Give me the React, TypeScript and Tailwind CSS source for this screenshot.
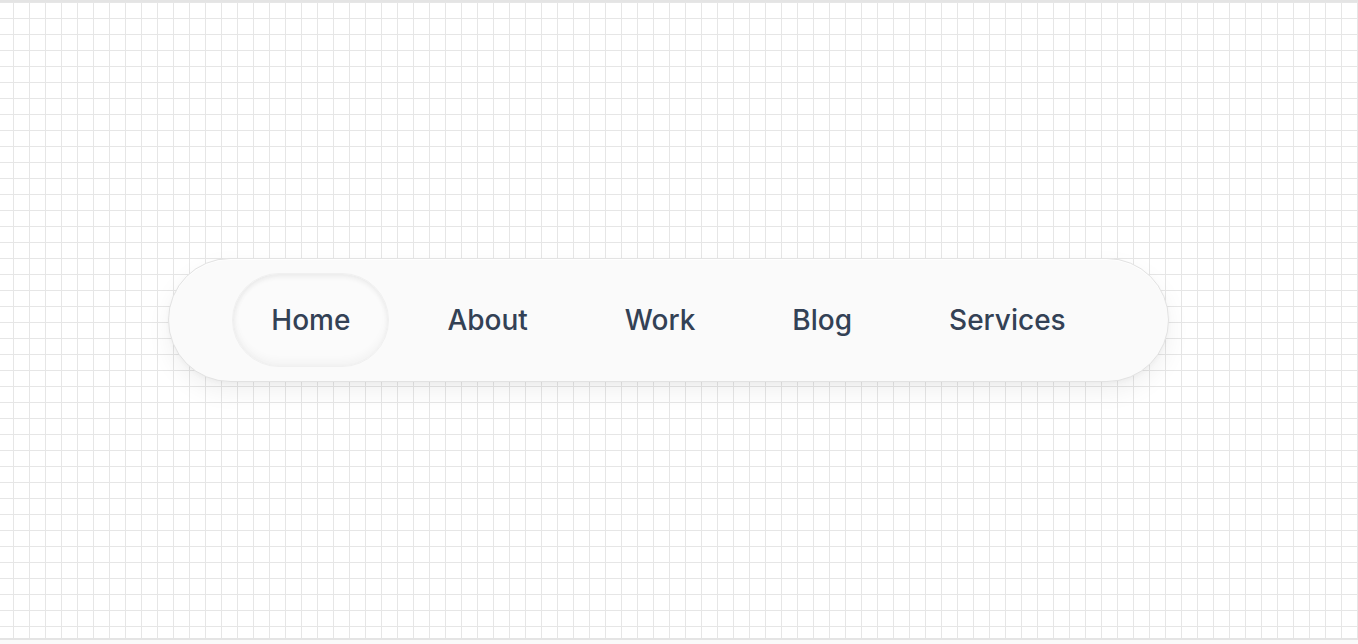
import React from "react";

const items = ["Home", "About", "Work", "Blog", "Services"];

export default function App() {
  return (
    <div className="h-[644px] w-full bg-[#fafafa] overflow-hidden" style={{ fontFamily: "Inter, 'Noto Sans', sans-serif" }}>
      <div className="h-[640px] w-full border-t-2 border-b-2 border-[#e4e4e4] bg-white bg-[linear-gradient(to_right,#e6e6e6_1px,transparent_1px),linear-gradient(to_bottom,#e6e6e6_1px,transparent_1px)] bg-[size:16px_16px] bg-[position:13px_0px] flex items-center justify-center pr-[21px]">
        <nav className="flex items-center gap-[19px] rounded-full border border-[#e2e2e2] bg-[#fafafa] px-[63px] py-[14px] shadow-[0_10px_24px_rgba(0,0,0,0.06),0_2px_4px_rgba(0,0,0,0.03),inset_0_1px_1px_rgba(255,255,255,0.9)]">
          {items.map((label, i) => (
            <a
              key={label}
              className={
                i === 0
                  ? "flex h-[94px] items-center rounded-full px-[38px] text-[28px] font-medium text-[#334155] bg-[#fbfbfb] border border-[#f0f0f0] shadow-[inset_0_3px_5px_rgba(0,0,0,0.06),inset_0_-5px_8px_rgba(0,0,0,0.035),inset_3px_0_6px_rgba(0,0,0,0.015)]"
                  : "flex h-[94px] items-center rounded-full border border-transparent px-[38px] text-[28px] font-medium text-[#334155]"
              }
            >
              {label}
            </a>
          ))}
        </nav>
      </div>
    </div>
  );
}
